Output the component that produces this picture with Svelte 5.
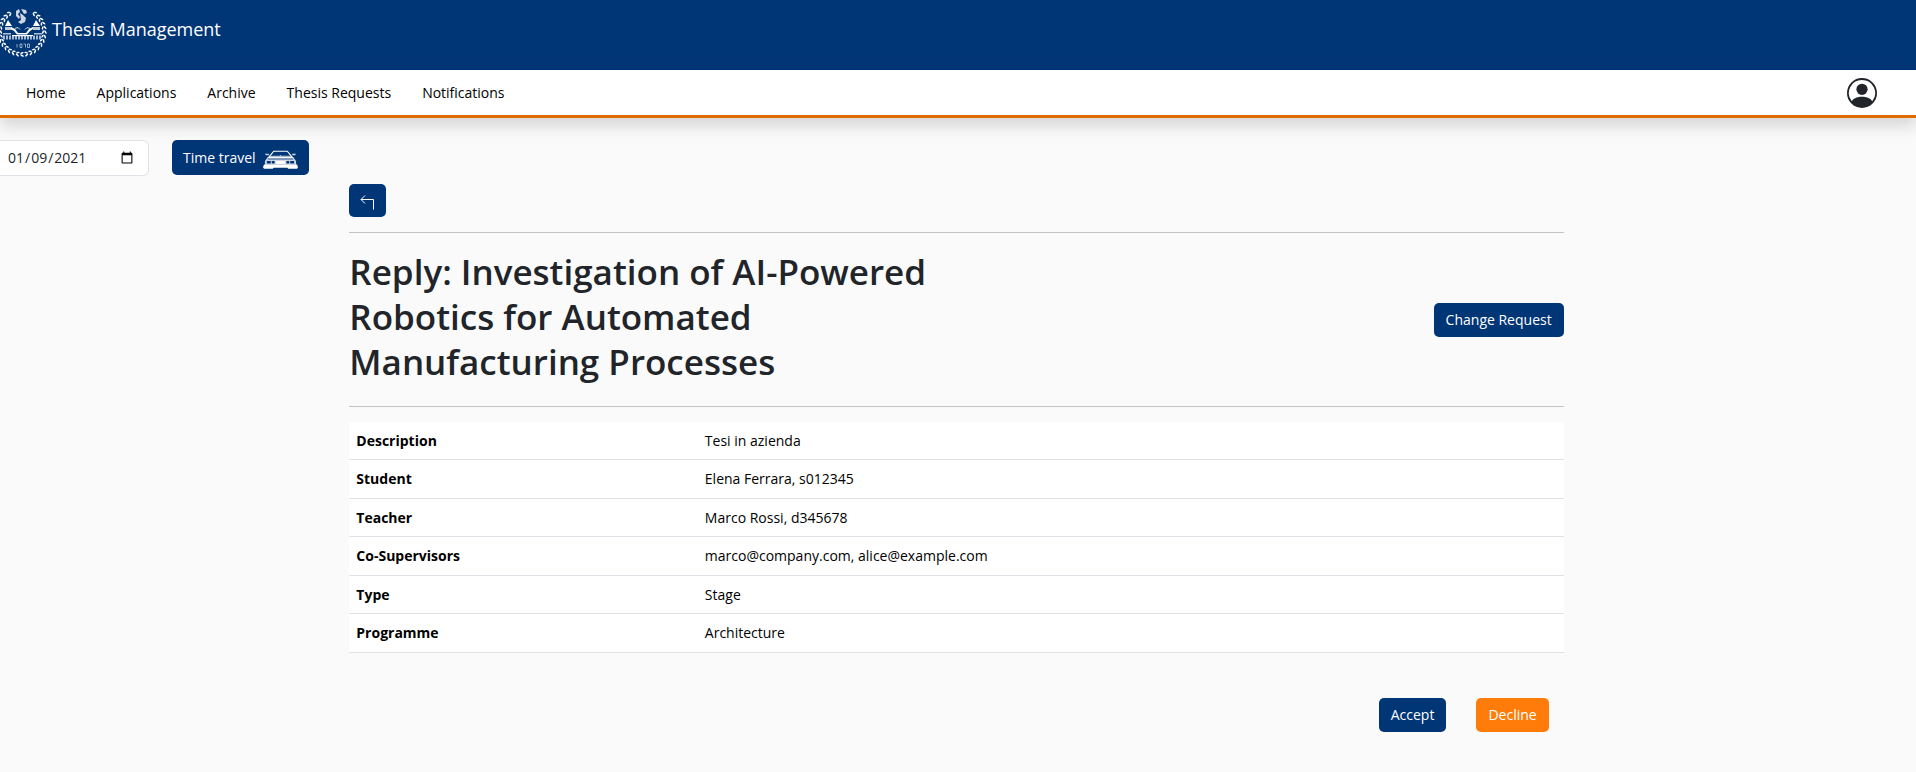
<script lang="ts">
  const navItems = ['Home', 'Applications', 'Archive', 'Thesis Requests', 'Notifications'];

  const details = [
    { label: 'Description', value: 'Tesi in azienda' },
    { label: 'Student', value: 'Elena Ferrara, s012345' },
    { label: 'Teacher', value: 'Marco Rossi, d345678' },
    { label: 'Co-Supervisors', value: 'marco@company.com, alice@example.com' },
    { label: 'Type', value: 'Stage' },
    { label: 'Programme', value: 'Architecture' }
  ];

  // Laurel leaves run round the crest, leaving a gap at the top.
  const leaves = Array.from({ length: 27 }, (_, i) => 34 + (i * 292) / 26);

  let date = $state('2021-01-09');
</script>

<header class="brand-bar">
  <a class="brand" href="#home">
    <svg class="crest" viewBox="0 0 50 50" aria-hidden="true">
      {#each leaves as angle}
        <g transform="rotate({angle} 25 25)">
          <ellipse cx="25" cy="1.500" rx="2" ry="0.8" transform="rotate({angle < 180 ? -30 : 30} 25 1.500)" />
          <ellipse cx="25" cy="4" rx="1.800" ry="0.8" transform="rotate({angle < 180 ? 25 : -25} 25 4)" />
        </g>
      {/each}
      <path d="M19 4l3-2 1 3-2 2 2 3-1 2-3-3zM24 2l5 1 1 3-3 1zM23 6l3 2 3 3-1 4-4 2-3-2 3-2z" opacity="0.8" />
      <path d="M11 13l4 6H8zM39 13l4 6h-7z" />
      <path d="M8 20h7v3H8zM36 20h7v3h-7z" opacity="0.75" />
      <path d="M14 20l4 2 3 4h8l3-4 4-2v2l-3 2-3 3.500H20L17 24l-3-2z" />
      <path d="M18 21.500l3-1 2 2M28 22.500l2-2 3 1" fill="none" stroke="#fff" opacity="0.8" />
      <path d="M15 28h21v1.200H15z" />
      <path d="M6 26h8v1.500H6zM37 26h8v1.500h-8z" opacity="0.7" />
      <path d="M6 30.500h39" fill="none" stroke="#fff" stroke-width="4" stroke-dasharray="2 1" opacity="0.65" />
      <path d="M20 37v3.500M25 37h-2v3.500h2zM26.500 37h2v3.500M30.500 37h2v3.500h-2z" fill="none" stroke="#fff" stroke-width="0.8" opacity="0.7" />
    </svg>
    <span>Thesis Management</span>
  </a>
</header>

<nav class="menu-bar">
  <ul>
    {#each navItems as item}
      <li><a href="#{item.toLowerCase().replace(' ', '-')}">{item}</a></li>
    {/each}
  </ul>
  <button class="profile" aria-label="Profile">
    <svg viewBox="0 0 16 16" aria-hidden="true">
      <path d="M11 6a3 3 0 1 1-6 0 3 3 0 0 1 6 0" />
      <path fill-rule="evenodd" d="M0 8a8 8 0 1 1 16 0A8 8 0 0 1 0 8m8-7a7 7 0 0 0-5.468 11.37C3.242 11.226 4.805 10 8 10s4.757 1.225 5.468 2.37A7 7 0 0 0 8 1" />
    </svg>
  </button>
</nav>

<div class="page">
  <form class="clock" onsubmit={(e) => e.preventDefault()}>
    <input type="date" aria-label="Date" bind:value={date} />
    <button class="btn travel" type="submit">
      Time travel
      <svg viewBox="0 0 36 20" aria-hidden="true">
        <path d="M11 1h14l5 6H6z" fill="none" stroke="#fff" stroke-width="1.200" />
        <path d="M2 3.500h4v1.500H3zM34 3.500h-4v1.500h3z" opacity="0.8" />
        <path d="M8 5.500h9l1-1 1 1h9v1H8z" opacity="0.7" />
        <path d="M5 7h26l3 4v4H2v-4z" opacity="0.8" />
        <path d="M4 11h4v2.500H4zM9 11h3v2.500H9zM24 11h3v2.500h-3zM28 11h4v2.500h-4z" fill="#003576" />
        <path d="M13 11h10v3H13z" />
        <path d="M5 9h26" fill="none" stroke="#003576" stroke-width="0.8" />
        <path d="M1 14.500h34l1 3-1 1.500h-9l-1-1H11l-1 1H1l-1-1.500z" />
      </svg>
    </button>
  </form>

  <main>
    <button class="btn back" aria-label="Back">
      <svg viewBox="0 0 15 15" aria-hidden="true">
        <path d="M5 .5l-4 4 4 4M1 4.500h12.500v10" fill="none" stroke="#fff" />
      </svg>
    </button>

    <hr />
    <div class="title-row">
      <h1>Reply: Investigation of AI-Powered Robotics for Automated Manufacturing Processes</h1>
      <button class="btn">Change Request</button>
    </div>
    <hr />

    <table>
      <tbody>
        {#each details as row}
          <tr>
            <th scope="row">{row.label}</th>
            <td>{row.value}</td>
          </tr>
        {/each}
      </tbody>
    </table>

    <div class="actions">
      <button class="btn">Accept</button>
      <button class="btn decline">Decline</button>
    </div>
  </main>
</div>

<style>
  :global(body) {
    margin: 0;
    background: #fafafa;
    color: #212529;
    font: 14px/22px 'Open Sans', 'Noto Sans', sans-serif;
  }

  :global(*) {
    box-sizing: border-box;
  }

  .brand-bar {
    height: 70px;
    overflow: hidden;
    background: #003576;
  }

  .brand {
    display: flex;
    align-items: flex-start;
    gap: 5px;
    margin-left: -3px;
    padding-top: 7px;
    color: #fff;
    font-size: 18px;
    line-height: 44px;
    text-decoration: none;
  }

  .crest {
    width: 50px;
    height: 50px;
    fill: #fff;
  }

  .menu-bar {
    position: relative;
    display: flex;
    align-items: center;
    justify-content: space-between;
    height: 48px;
    padding: 0 39px 0 26px;
    border-bottom: 3px solid #e06c00;
    background: #fff;
    box-shadow: 0 8px 16px rgba(0, 0, 0, 0.15);
  }

  .menu-bar ul {
    display: flex;
    gap: 31px;
    margin: 0;
    padding: 0;
    list-style: none;
  }

  .menu-bar a {
    color: #000;
    text-decoration: none;
  }

  .profile {
    display: flex;
    padding: 0;
    border: 0;
    background: none;
    color: #212529;
  }

  .profile svg {
    width: 30px;
    height: 30px;
    fill: currentColor;
  }

  .page {
    display: grid;
    grid-template-columns: 2fr 8fr 2fr;
    padding-top: 22px;
  }

  .clock {
    display: flex;
    align-items: flex-start;
    gap: 23px;
  }

  input {
    width: 149px;
    height: 36px;
    padding: 6px 12px 6px 7px;
    border: 1px solid #dee2e6;
    border-left: 0;
    border-radius: 0 6px 6px 0;
    background: #fff;
    color: #212529;
    font: inherit;
  }

  .btn {
    display: inline-flex;
    align-items: center;
    justify-content: center;
    height: 34px;
    padding: 0 12px;
    border: 0;
    border-radius: 5px;
    background: #003576;
    color: #fff;
    font: inherit;
    white-space: nowrap;
  }

  .travel {
    gap: 7px;
    height: 35px;
    padding: 0 11px;
  }

  .travel svg {
    width: 35px;
    height: 20px;
    margin-top: 4px;
    fill: #fff;
  }

  main {
    padding: 44px 33px 40px 30px;
  }

  .back {
    display: flex;
    width: 37px;
    height: 33px;
    padding: 0;
  }

  .back svg {
    width: 15px;
    height: 15px;
    margin-top: 4px;
  }

  hr {
    height: 1px;
    margin: 15px 0;
    border: 0;
    background: #c4c4c5;
  }

  .title-row {
    display: flex;
    align-items: center;
    justify-content: space-between;
  }

  h1 {
    max-width: 608px;
    margin: 0;
    padding: 1px 0 7px;
    font-size: 35px;
    font-weight: 600;
    line-height: 45px;
  }

  table {
    width: 100%;
    border-collapse: separate;
    border-spacing: 0;
    background: #fff;
    color: #000;
    table-layout: fixed;
  }

  th,
  td {
    padding: 8px 7px;
    border-bottom: 1px solid #dee2e6;
    text-align: left;
  }

  tr:nth-child(odd) > * {
    padding-bottom: 7px;
  }

  th {
    width: 28.7%;
    font-weight: 700;
  }

  .actions {
    display: flex;
    justify-content: flex-end;
    gap: 30px;
    padding: 45px 15px 0;
  }

  .decline {
    background: #ff7c0a;
  }
</style>
